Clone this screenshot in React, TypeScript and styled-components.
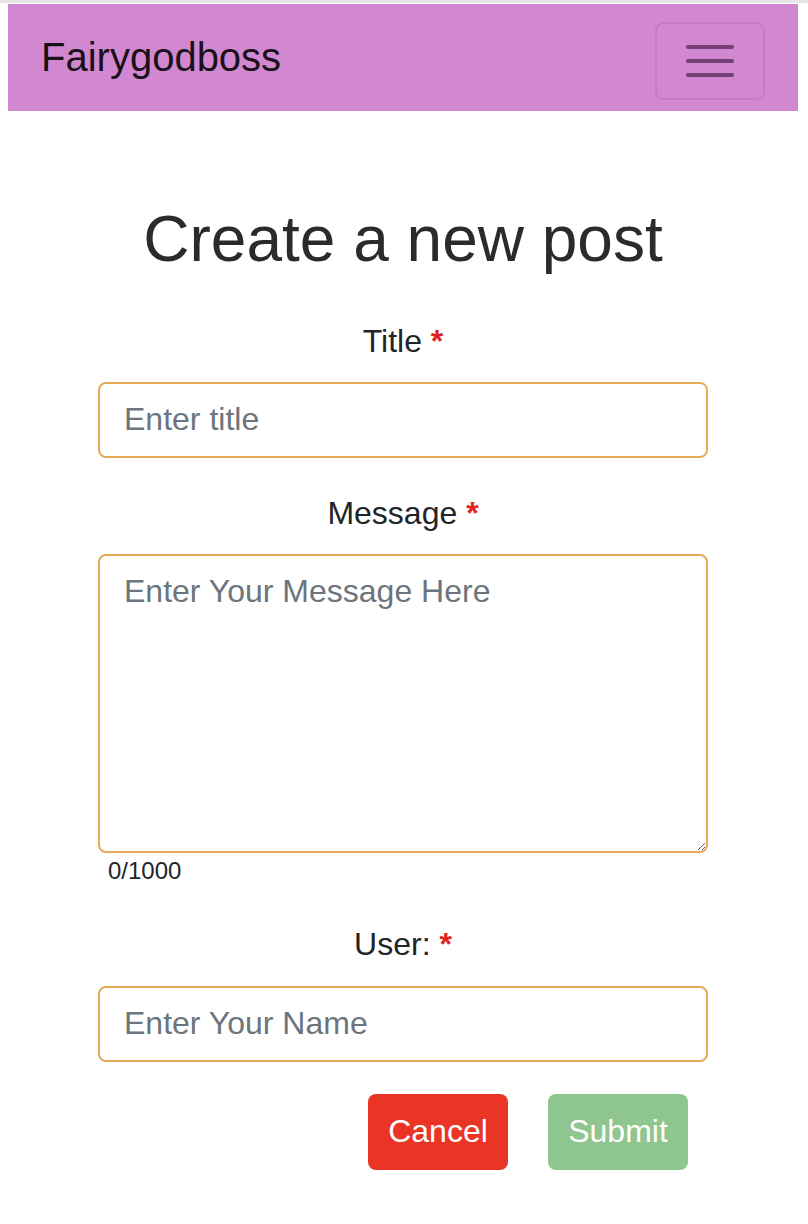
import React from "react";
import styled, { createGlobalStyle } from "styled-components";

const GlobalStyle = createGlobalStyle`
  html, body { margin: 0; padding: 0; background: #ffffff; }
  body { font-family: "Liberation Sans", Arial, Helvetica, sans-serif; color: #212529; }
  * { box-sizing: border-box; }
`;

const TopStrip = styled.div`
  height: 3px;
  background: #e6e6e6;
  margin-bottom: 1px;
`;

const Page = styled.div`
  padding: 0 10px 0 8px;
`;

const Navbar = styled.nav`
  height: 107px;
  background: #d288d1;
  display: flex;
  align-items: center;
  justify-content: space-between;
  padding: 0 33px 0 33px;
`;

const Brand = styled.a`
  font-size: 40px;
  line-height: 1;
  color: rgba(0, 0, 0, 0.9);
  text-decoration: none;
  margin-top: -2px;
`;

const Toggler = styled.button`
  width: 110px;
  height: 78px;
  margin-top: 6px;
  background: transparent;
  border: 2px solid rgba(0, 0, 0, 0.08);
  border-radius: 9px;
  display: flex;
  align-items: center;
  justify-content: center;
  padding: 0;
`;

const Main = styled.main`
  width: 610px;
  margin: 0 auto;
  padding-top: 90px;
  padding-bottom: 40px;
`;

const Heading = styled.h1`
  margin: 0 0 39px;
  font-size: 64px;
  line-height: 1.2;
  font-weight: 400;
  text-align: center;
  color: #2b2b2b;
`;

const Group = styled.div<{ $gap?: number }>`
  display: flex;
  flex-direction: column;
  margin-bottom: ${(p) => (p.$gap ?? 31)}px;
`;

const Label = styled.label<{ $below?: number }>`
  display: block;
  text-align: center;
  font-size: 32px;
  line-height: 48px;
  color: #212529;
  margin-bottom: ${(p) => (p.$below ?? 17)}px;
`;

const Required = styled.span`
  color: #e0231c;
  font-weight: 700;
`;

const fieldStyles = `
  width: 100%;
  border: 2px solid #e6aa58;
  border-radius: 8px;
  font-family: "Liberation Sans", Arial, Helvetica, sans-serif;
  font-size: 32px;
  color: #495057;
  background: #ffffff;
  outline: none;
  &::placeholder { color: #6c757d; opacity: 1; }
`;

const Input = styled.input`
  ${fieldStyles}
  display: block;
  height: 76px;
  padding: 0 24px;
`;

const TextArea = styled.textarea`
  ${fieldStyles}
  display: block;
  height: 299px;
  padding: 11px 24px 12px;
  line-height: 1.5;
  resize: vertical;
`;

const Counter = styled.div`
  font-size: 24px;
  line-height: 36px;
  padding-left: 10px;
  color: #212529;
`;

const Actions = styled.div`
  display: flex;
  justify-content: flex-end;
  gap: 40px;
  padding-right: 20px;
`;

const Button = styled.button<{ $tone: "danger" | "success" }>`
  width: 140px;
  height: 76px;
  border: none;
  border-radius: 8px;
  font-family: "Liberation Sans", Arial, Helvetica, sans-serif;
  font-size: 32px;
  color: #ffffff;
  padding: 0;
  background: ${(p) => (p.$tone === "danger" ? "#e93426" : "#8fc58e")};
`;

const MenuIcon = () => (
  <svg width="50" height="36" viewBox="0 0 50 36" aria-hidden="true">
    <g stroke="rgba(60, 20, 60, 0.62)" strokeWidth="4" strokeLinecap="round">
      <line x1="3" y1="4" x2="47" y2="4" />
      <line x1="3" y1="18" x2="47" y2="18" />
      <line x1="3" y1="32" x2="47" y2="32" />
    </g>
  </svg>
);

export default function App() {
  return (
    <>
      <GlobalStyle />
      <TopStrip />
      <Page>
        <Navbar>
          <Brand href="#">Fairygodboss</Brand>
          <Toggler aria-label="Toggle navigation">
            <MenuIcon />
          </Toggler>
        </Navbar>
        <Main>
          <Heading>Create a new post</Heading>
          <Group>
            <Label htmlFor="title">
              Title <Required>*</Required>
            </Label>
            <Input id="title" placeholder="Enter title" autoFocus />
          </Group>
          <Group>
            <Label htmlFor="message">
              Message <Required>*</Required>
            </Label>
            <TextArea id="message" placeholder="Enter Your Message Here" />
            <Counter>0/1000</Counter>
          </Group>
          <Group $gap={32}>
            <Label htmlFor="user" $below={18}>
              User: <Required>*</Required>
            </Label>
            <Input id="user" placeholder="Enter Your Name" />
          </Group>
          <Actions>
            <Button $tone="danger">Cancel</Button>
            <Button $tone="success">Submit</Button>
          </Actions>
        </Main>
      </Page>
    </>
  );
}
